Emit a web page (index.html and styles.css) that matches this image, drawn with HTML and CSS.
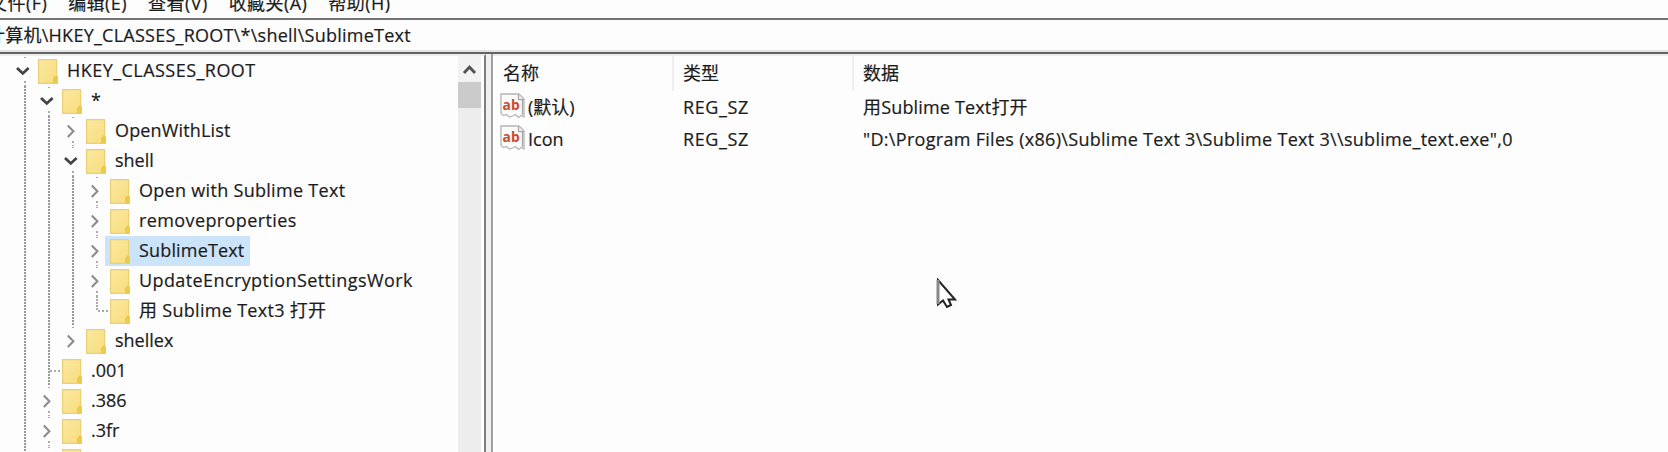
FILE: index.html
```
<!DOCTYPE html>
<html lang="zh-CN">
<head>
<meta charset="utf-8">
<title>注册表编辑器</title>
<link rel="stylesheet" href="styles.css">
</head>
<body>
<svg class="defs" width="0" height="0">
  <defs>
    <linearGradient id="fold" x1="0" y1="0" x2="1" y2="1"><stop offset="0" stop-color="#fbe8a0"/><stop offset="1" stop-color="#f8dc7c"/></linearGradient>
    <symbol id="folder" viewBox="0 0 20 25"><path d="M.6.6h18v16.500l1.100 1v6.300H.6z" fill="url(#fold)" stroke="#ead074" stroke-width="1.200"/><path d="M15 24.400v-5.200l2.600-3 2.100 1.900v6.300z" fill="#eccb48"/></symbol>
    <symbol id="open" viewBox="0 0 24 30"><path d="M5 12l5.800 5.400 5.800-5.400" fill="none" stroke="#444" stroke-width="2.800"/></symbol>
    <symbol id="closed" viewBox="0 0 24 30"><path d="M7.800 9.500l5.600 5.800-5.600 5.800" fill="none" stroke="#8c8c8c" stroke-width="2.100"/></symbol>
    <symbol id="string" viewBox="0 0 26 26"><path d="M1 1h18l5 5v18l-3-1.500-2.500 2-3-3-3 1.500-3 1-3-2.500-3 1-2.500-2z" fill="#fbfbfb" stroke="#b5b5b5" stroke-width="1.300"/><path d="M18.500 1.500v5H24M22.500 7v15" fill="none" stroke="#a8a8a8" stroke-width="1.300"/><text x="2.600" y="16.500" textLength="17" lengthAdjust="spacingAndGlyphs" class="ab">ab</text></symbol>
  </defs>
</svg>
<div class="window">
  <nav class="menu"><span class="m1">文件(F)</span><span>编辑(E)</span><span>查看(V)</span><span>收藏夹(A)</span><span>帮助(H)</span></nav>
  <div class="address"><span>计算机\HKEY_CLASSES_ROOT\*\shell\SublimeText</span></div>
  <main class="panes">
    <section class="tree">
      <div class="rows">
        <div class="row"><i class="cell ends"><svg><use href="#open"/></svg></i><span class="item"><svg class="folder"><use href="#folder"/></svg><b class="s5">HKEY_CLASSES_ROOT</b></span></div>
        <div class="row"><i class="cell line"></i><i class="cell ends"><svg><use href="#open"/></svg></i><span class="item"><svg class="folder"><use href="#folder"/></svg><b>*</b></span></div>
        <div class="row"><i class="cell line"></i><i class="cell line"></i><i class="cell ends"><svg><use href="#closed"/></svg></i><span class="item"><svg class="folder"><use href="#folder"/></svg><b class="s2">OpenWithList</b></span></div>
        <div class="row"><i class="cell line"></i><i class="cell line"></i><i class="cell ends"><svg><use href="#open"/></svg></i><span class="item"><svg class="folder"><use href="#folder"/></svg><b>shell</b></span></div>
        <div class="row"><i class="cell line"></i><i class="cell line"></i><i class="cell line"></i><i class="cell ends"><svg><use href="#closed"/></svg></i><span class="item"><svg class="folder"><use href="#folder"/></svg><b class="s3">Open with Sublime Text</b></span></div>
        <div class="row"><i class="cell line"></i><i class="cell line"></i><i class="cell line"></i><i class="cell ends"><svg><use href="#closed"/></svg></i><span class="item"><svg class="folder"><use href="#folder"/></svg><b class="s4">removeproperties</b></span></div>
        <div class="row"><i class="cell line"></i><i class="cell line"></i><i class="cell line"></i><i class="cell ends"><svg><use href="#closed"/></svg></i><span class="item selected"><svg class="folder"><use href="#folder"/></svg><b class="s1">SublimeText</b></span></div>
        <div class="row"><i class="cell line"></i><i class="cell line"></i><i class="cell line"></i><i class="cell ends"><svg><use href="#closed"/></svg></i><span class="item"><svg class="folder"><use href="#folder"/></svg><b class="s4">UpdateEncryptionSettingsWork</b></span></div>
        <div class="row"><i class="cell line"></i><i class="cell line"></i><i class="cell line"></i><i class="cell last"></i><span class="item"><svg class="folder"><use href="#folder"/></svg><b class="s3">用 Sublime Text3 打开</b></span></div>
        <div class="row"><i class="cell line"></i><i class="cell line"></i><i class="cell top"><svg><use href="#closed"/></svg></i><span class="item"><svg class="folder"><use href="#folder"/></svg><b>shellex</b></span></div>
        <div class="row"><i class="cell line"></i><i class="cell line branch"></i><span class="item"><svg class="folder"><use href="#folder"/></svg><b>.001</b></span></div>
        <div class="row"><i class="cell line"></i><i class="cell ends"><svg><use href="#closed"/></svg></i><span class="item"><svg class="folder"><use href="#folder"/></svg><b>.386</b></span></div>
        <div class="row"><i class="cell line"></i><i class="cell ends"><svg><use href="#closed"/></svg></i><span class="item"><svg class="folder"><use href="#folder"/></svg><b>.3fr</b></span></div>
        <div class="row"><i class="cell line"></i><i class="cell ends"></i><span class="item"><svg class="folder"><use href="#folder"/></svg></span></div>
      </div>
      <div class="scroll"><svg class="up" viewBox="0 0 23 26"><path d="M6 17l5.500-6 5.500 6" fill="none" stroke="#505050" stroke-width="2.800"/></svg><div class="thumb"></div></div>
    </section>
    <div class="splitter"></div>
    <section class="values">
      <div class="head"><span>名称</span><span>类型</span><span>数据</span></div>
      <div class="value"><span class="name"><svg><use href="#string"/></svg>(默认)</span><span class="s6">REG_SZ</span><span class="s1">用Sublime Text打开</span></div>
      <div class="value"><span class="name"><svg><use href="#string"/></svg>Icon</span><span class="s6">REG_SZ</span><span class="s3">"D:\Program Files (x86)\Sublime Text 3\Sublime Text 3\\sublime_text.exe",0</span></div>
    </section>
  </main>
</div>
<svg class="cursor" viewBox="0 0 22 32"><path d="M2 2v24.500l5-4 4 6.500 4-2-2.500-5.500H19z" fill="#fff" stroke="#222" stroke-width="2"/><path d="M2 2v24" stroke="#888" stroke-width="3"/></svg>
</body>
</html>
```
FILE: styles.css
```
* { box-sizing: border-box; }
body { margin: 0; background: #fdfdfd; color: #1c1c1c; font: 18px/30px "Open Sans", "Noto Sans CJK SC", sans-serif; -webkit-text-stroke: .2px #1c1c1c; overflow: hidden; }
.defs, .cursor { position: absolute; }
.cursor { left: 936px; top: 278px; width: 22px; height: 32px; }
.window { height: 452px; display: flex; flex-direction: column; white-space: nowrap; }
.menu { height: 18px; flex: none; display: flex; align-items: flex-end; line-height: 26px; overflow: hidden; padding-bottom: 2px; }
.menu span { flex: none; margin-right: 21px; letter-spacing: .45px; }
.menu .m1 { margin-left: -11px; }
.address { height: 34px; flex: none; border-top: 2px solid #747474; border-bottom: 2px solid #e2e2e2; line-height: 31px; overflow: hidden; letter-spacing: .25px; }
.address span { margin-left: -13px; }
.panes { flex: 1; min-height: 0; display: flex; border-top: 2px solid #646464; }
.tree { width: 486px; flex: none; display: flex; justify-content: space-between; overflow: hidden; border-top: 2px solid #ececec; border-right: 2px solid #7e7e7e; padding-right: 3px; }
.rows { padding-left: 12px; }
.row { height: 30px; display: flex; }
.cell { width: 24px; height: 30px; flex: none; background-repeat: no-repeat; }
.cell svg { display: block; width: 24px; height: 30px; }
.line { background: repeating-linear-gradient(#999 0 2px, transparent 2px 3px) 12px 0 / 2px 30px no-repeat; }
.ends { background: linear-gradient(#aaa, #aaa) 12px 1px / 2px 1px no-repeat, repeating-linear-gradient(#aaa 0 2px, transparent 2px 4px) 12px 25px / 2px 5px no-repeat; }
.top { background: linear-gradient(#aaa, #aaa) 12px 1px / 2px 1px no-repeat; }
.last { background: repeating-linear-gradient(#aaa 0 2px, transparent 2px 3px) 12px 0 / 2px 15px no-repeat, repeating-linear-gradient(90deg, #aaa 0 2px, transparent 2px 4px) 14px 14px / 10px 2px no-repeat; }
.branch { background: repeating-linear-gradient(#999 0 2px, transparent 2px 3px) 12px 0 / 2px 30px no-repeat, repeating-linear-gradient(90deg, #aaa 0 2px, transparent 2px 4px) 14px 14px / 10px 2px no-repeat; }
.item { display: flex; align-items: center; padding: 0 6px 0 6px; margin-left: -4px; }
.selected { background: linear-gradient(90deg, transparent 1px, #cce4fa 1px); }
.folder { width: 20px; height: 25px; margin-right: 9px; }
.item b { font-weight: 400; line-height: 29px; height: 30px; }
.s1 { letter-spacing: .16px; }
.s2 { letter-spacing: .16px; }
.s3 { letter-spacing: .3px; }
.s4 { letter-spacing: .4px; }
.s5 { letter-spacing: .46px; }
.s6 { letter-spacing: .6px; }
.scroll { width: 23px; background: #ededed; }
.up { display: block; width: 23px; height: 26px; background: #f2f2f2; }
.thumb { height: 26px; background: #cbcbcb; }
.splitter { width: 7px; flex: none; background: #f0f0f0; border-right: 2px solid #a0a0a0; }
.values { flex: 1; border-top: 2px solid #ececec; }
.head, .value { display: grid; grid-template-columns: 181px 180px 1fr; }
.head { height: 35px; line-height: 35px; }
.head span { padding-left: 10px; border-right: 2px solid #efefef; }
.head span:nth-child(n+2) { padding-left: 9px; }
.head span:last-child { border: 0; }
.value { height: 32px; line-height: 32px; }
.value span { padding-left: 9px; }
.value .name { padding-left: 7px; display: flex; }
.name svg { width: 26px; height: 26px; margin: 2px 2px 0 0; }
.ab { font: 700 15px "Open Sans"; fill: #cc4a2c; -webkit-text-stroke: 0; }
```
